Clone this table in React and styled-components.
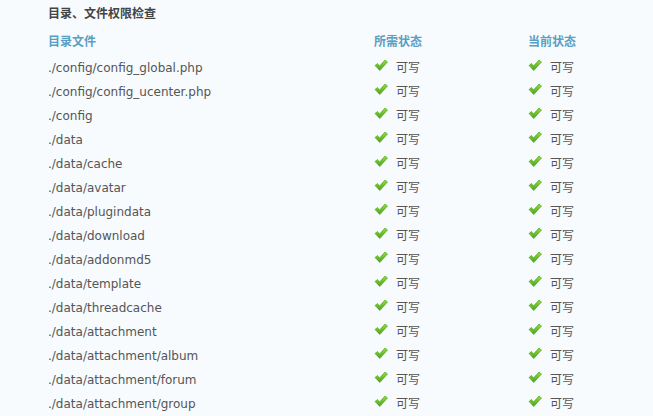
import { Fragment } from "react";
import styled, { createGlobalStyle } from "styled-components";

const GlobalStyle = createGlobalStyle`
  html, body {
    margin: 0;
    padding: 0;
    background: #f7fbfe;
  }
`

const Page = styled.div`
  width: 653px;
  height: 416px;
  overflow: hidden;
  padding: 5px 0 0 48px;
  box-sizing: border-box;
  font-family: "Liberation Sans", "Noto Sans CJK SC", sans-serif;
  color: #555;
`

const Title = styled.h3`
  margin: 0;
  font-size: 12px;
  font-weight: bold;
  line-height: 18px;
  color: #444;
`

const Table = styled.div`
  margin-top: 10px;
  display: grid;
  grid-template-columns: 326px 154px 1fr;
  grid-auto-rows: 24px;
`

const Head = styled.div`
  font-size: 12px;
  font-weight: bold;
  color: #5a9fc3;
  line-height: 18px;
`

const Cell = styled.div`
  font-family: "DejaVu Sans", "Noto Sans CJK SC", sans-serif;
  font-size: 12px;
  line-height: 20px;
  padding-top: 1px;
  color: #555;
  display: flex;
  align-items: flex-start;
`

const Status = styled(Cell)`
  font-family: "Liberation Sans", "Noto Sans CJK SC", sans-serif;
  gap: 8px;
`

const Check = () => (
  <svg width="14" height="13" viewBox="0 0 14 13" style={{ marginTop: 1 }}>
    <defs>
      <linearGradient id="g" x1="0" y1="0" x2="0" y2="1">
        <stop offset="0" stopColor="#8ee03a" />
        <stop offset="1" stopColor="#4ca51a" />
      </linearGradient>
    </defs>
    <path d="M1 6.5 L3.5 4.5 L5.5 7 L11 1 L13.5 3 L5.8 11.5 Z" fill="url(#g)" stroke="#4a9a1a" strokeWidth="0.6" strokeLinejoin="round" />
  </svg>
)

const files = [
  "./config/config_global.php",
  "./config/config_ucenter.php",
  "./config",
  "./data",
  "./data/cache",
  "./data/avatar",
  "./data/plugindata",
  "./data/download",
  "./data/addonmd5",
  "./data/template",
  "./data/threadcache",
  "./data/attachment",
  "./data/attachment/album",
  "./data/attachment/forum",
  "./data/attachment/group",
]

const App = () => {
  return (
    <Page>
      <GlobalStyle />
      <Title>目录、文件权限检查</Title>
      <Table>
        <Head>目录文件</Head>
        <Head>所需状态</Head>
        <Head>当前状态</Head>
        {files.map((f) => (
          <Fragment key={f}>
            <Cell>{f}</Cell>
            <Status><Check />可写</Status>
            <Status><Check />可写</Status>
          </Fragment>
        ))}
      </Table>
    </Page>
  );
};

export default App;
